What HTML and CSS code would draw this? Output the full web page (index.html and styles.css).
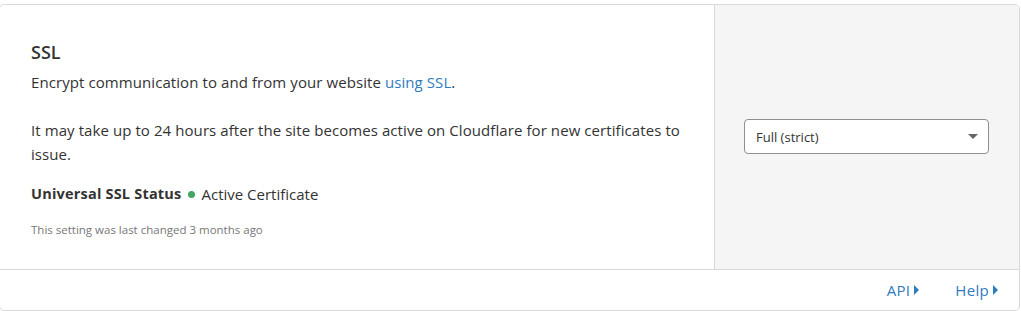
FILE: index.html
```html
<!DOCTYPE html>
<html lang="en">
<head>
    <meta charset="UTF-8">
    <meta name="viewport" content="width=device-width, initial-scale=1.0">
    <title>SSL</title>
    <link rel="stylesheet" href="styles.css">
</head>
<body>
    <div class="card">
        <div class="card-body">
            <div class="card-content">
                <h3 class="card-title">SSL</h3>
                <p>Encrypt communication to and from your website <a href="#">using SSL</a>.</p>
                <p class="note">It may take up to 24 hours after the site becomes active on Cloudflare for new certificates to issue.</p>
                <div class="status">
                    <strong>Universal SSL Status</strong>
                    <span class="dot"></span>
                    <span>Active Certificate</span>
                </div>
                <div class="changed">This setting was last changed 3 months ago</div>
            </div>
            <div class="card-control">
                <div class="select">
                    <span>Full (strict)</span>
                    <span class="caret"></span>
                </div>
            </div>
        </div>
        <div class="card-footer">
            <a href="#" class="footer-link">API<span class="arrow"></span></a>
            <a href="#" class="footer-link">Help<span class="arrow"></span></a>
        </div>
    </div>
</body>
</html>
```

FILE: styles.css
```css
/* General Reset */
* {
    margin: 0;
    padding: 0;
    box-sizing: border-box;
    font-family: "Open Sans", sans-serif;
}

body {
    background: #fff;
    color: #333;
}

.card {
    margin: 4px 1px 0 -1px;
    height: 307px;
    border: 1px solid #d9d9d9;
    border-radius: 5px;
    overflow: hidden;
    display: flex;
    flex-direction: column;
}

.card-body {
    display: flex;
    height: 265px;
    border-bottom: 1px solid #d9d9d9;
}

.card-content {
    flex: 1;
    padding: 35px 30px 0 31px;
    font-size: 15px;
    line-height: 24px;
    letter-spacing: 0.08px;
}

.card-title {
    font-size: 18px;
    font-weight: 600;
    line-height: 24px;
    color: #333;
    margin-bottom: 6px;
    letter-spacing: 0;
}

.card-content a {
    color: #2f7bbf;
    text-decoration: none;
}

.note {
    margin-top: 24px;
}

.status {
    display: flex;
    align-items: center;
    margin-top: 16px;
}

.status strong {
    font-weight: 700;
    font-size: 14.5px;
    letter-spacing: 0.2px;
}

.dot {
    width: 7px;
    height: 7px;
    border-radius: 50%;
    background: #3fa663;
    margin: 0 6px 0 7px;
}

.status span:last-child {
    letter-spacing: 0;
}

.changed {
    margin-top: 16px;
    font-size: 11.5px;
    line-height: 16px;
    color: #777;
    letter-spacing: 0;
}

.card-control {
    width: 305px;
    background: #f5f5f5;
    border-left: 1px solid #d9d9d9;
    padding: 114px 30px 0 29px;
}

.select {
    height: 35px;
    background: #fff;
    border: 1px solid #8f8f8f;
    border-radius: 4px;
    display: flex;
    align-items: center;
    justify-content: space-between;
    padding: 0 10px 0 11px;
    font-size: 13px;
    color: #333;
}

.caret {
    width: 0;
    height: 0;
    border-left: 5px solid transparent;
    border-right: 5px solid transparent;
    border-top: 5px solid #666;
}

.card-footer {
    flex: 1;
    display: flex;
    justify-content: flex-end;
    align-items: center;
    gap: 36px;
    padding: 0 21px 0 0;
}

.footer-link {
    display: flex;
    align-items: center;
    color: #2f7bbf;
    text-decoration: none;
    font-size: 15px;
    letter-spacing: 0.3px;
}

.arrow {
    margin-left: 4px;
    width: 0;
    height: 0;
    border-top: 5px solid transparent;
    border-bottom: 5px solid transparent;
    border-left: 5px solid #2f7bbf;
}
```
